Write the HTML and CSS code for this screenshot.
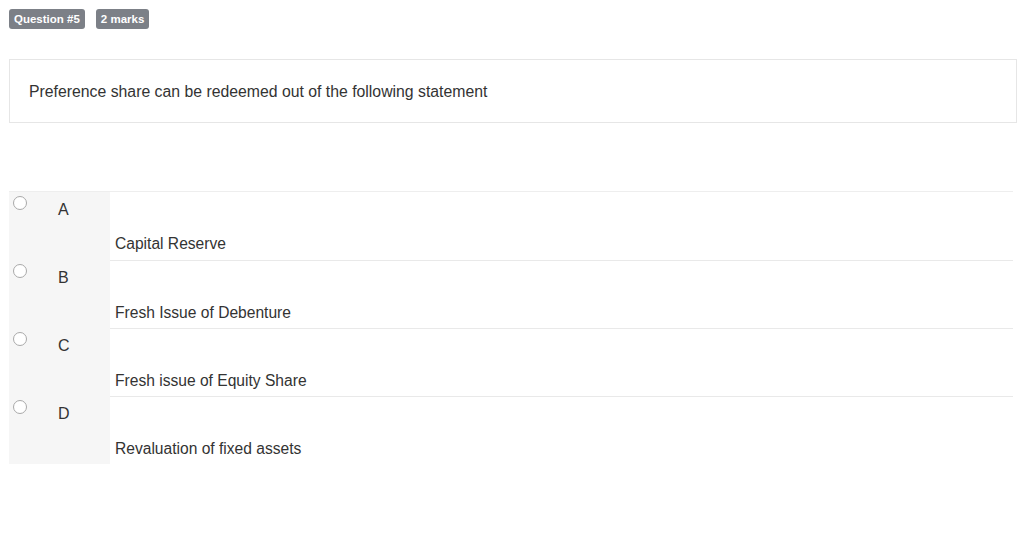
FILE: index.html
```html
<!DOCTYPE html>
<html>
<head>
<meta charset="utf-8">
<link rel="stylesheet" href="styles.css">
</head>
<body>
<div class="page">
  <div class="badges">
    <span class="badge">Question #5</span>
    <span class="badge">2 marks</span>
  </div>
  <div class="question">Preference share can be redeemed out of the following statement</div>
  <div class="options">
    <div class="row">
      <div class="key"><span class="radio"></span><span class="letter">A</span></div>
      <div class="answer">Capital Reserve</div>
    </div>
    <div class="row">
      <div class="key"><span class="radio"></span><span class="letter">B</span></div>
      <div class="answer">Fresh Issue of Debenture</div>
    </div>
    <div class="row">
      <div class="key"><span class="radio"></span><span class="letter">C</span></div>
      <div class="answer">Fresh issue of Equity Share</div>
    </div>
    <div class="row last">
      <div class="key"><span class="radio"></span><span class="letter">D</span></div>
      <div class="answer">Revaluation of fixed assets</div>
    </div>
  </div>
</div>
</body>
</html>
```
FILE: styles.css
```css
html, body {
  margin: 0;
  padding: 0;
  background: #ffffff;
}
body {
  font-family: "Liberation Sans", Arial, sans-serif;
  color: #333333;
}
.page {
  padding: 9px 7px 0 9px;
}
.badges {
  display: flex;
  gap: 11px;
  height: 20px;
}
.badge {
  display: inline-flex;
  align-items: center;
  justify-content: center;
  padding: 0 5px;
  height: 20px;
  box-sizing: border-box;
  background: #7c8087;
  color: #ffffff;
  font-size: 11.5px;
  font-weight: bold;
  border-radius: 3px;
}
.question {
  margin-top: 30px;
  height: 64px;
  box-sizing: border-box;
  border: 1px solid #e6e6e6;
  padding: 23px 0 0 19px;
  font-size: 15.8px;
  line-height: 18px;
  color: #333333;
}
.options {
  margin-top: 68px;
  border-top: 1px solid #eeeeee;
  margin-right: 4px;
}
.row {
  display: grid;
  grid-template-columns: 101px 1fr;
  height: 68px;
}
.row + .row .answer {
  border-top: 1px solid #e9e9e9;
}
.key {
  background: #f6f6f6;
  position: relative;
}
.radio {
  position: absolute;
  left: 4px;
  top: 4px;
  width: 12px;
  height: 12px;
  border: 1px solid #a9a9a9;
  border-radius: 50%;
  background: #ffffff;
}
.letter {
  position: absolute;
  left: 49px;
  top: 9px;
  font-size: 16px;
  line-height: 18px;
  color: #333333;
}
.answer {
  padding: 43px 0 0 5px;
  font-size: 15.6px;
  line-height: 17px;
  color: #333333;
  box-sizing: border-box;
}
```
